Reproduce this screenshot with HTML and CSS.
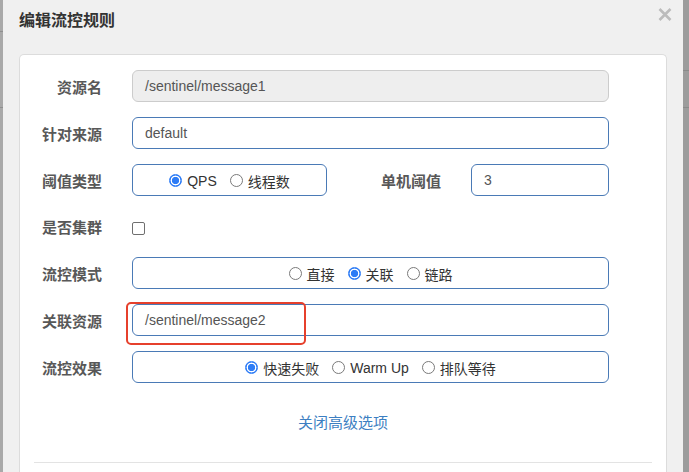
FILE: index.html
```html
<!DOCTYPE html>
<html lang="zh-CN">
<head>
<meta charset="utf-8">
<title>编辑流控规则</title>
<link rel="stylesheet" href="styles.css">
</head>
<body>
<div class="strip strip-left"></div>
<div class="modal">
  <div class="modal-header">
    <h4 class="modal-title">编辑流控规则</h4>
    <span class="close" aria-label="关闭">
      <svg width="14" height="13" viewBox="0 0 14 13"><path d="M1.5 1 L12.5 12 M12.5 1 L1.5 12" stroke="#bcbcbc" stroke-width="2.6" fill="none"/></svg>
    </span>
  </div>
  <div class="card">
    <div class="row">
      <label class="label">资源名</label>
      <div class="control"><div class="input disabled">/sentinel/message1</div></div>
    </div>
    <div class="row">
      <label class="label">针对来源</label>
      <div class="control"><div class="input">default</div></div>
    </div>
    <div class="row">
      <label class="label">阈值类型</label>
      <div class="control split">
        <div class="input radios short">
          <span class="radio-item"><span class="radio checked"></span>QPS</span>
          <span class="radio-item"><span class="radio"></span>线程数</span>
        </div>
        <label class="label label-mid">单机阈值</label>
        <div class="input small">3</div>
      </div>
    </div>
    <div class="row row-check">
      <label class="label">是否集群</label>
      <div class="control"><span class="checkbox"></span></div>
    </div>
    <div class="row">
      <label class="label">流控模式</label>
      <div class="control">
        <div class="input radios">
          <span class="radio-item"><span class="radio"></span>直接</span>
          <span class="radio-item"><span class="radio checked"></span>关联</span>
          <span class="radio-item"><span class="radio"></span>链路</span>
        </div>
      </div>
    </div>
    <div class="row">
      <label class="label">关联资源</label>
      <div class="control highlight-wrap">
        <div class="input">/sentinel/message2</div>
        <div class="highlight"></div>
      </div>
    </div>
    <div class="row">
      <label class="label">流控效果</label>
      <div class="control">
        <div class="input radios">
          <span class="radio-item"><span class="radio checked"></span>快速失败</span>
          <span class="radio-item"><span class="radio"></span>Warm Up</span>
          <span class="radio-item"><span class="radio"></span>排队等待</span>
        </div>
      </div>
    </div>
    <div class="toggle"><a class="link">关闭高级选项</a></div>
    <div class="divider"></div>
  </div>
</div>
<div class="strip strip-right"></div>
</body>
</html>
```
FILE: styles.css
```css
html, body {
  margin: 0;
  padding: 0;
}
body {
  width: 689px;
  height: 472px;
  overflow: hidden;
  display: flex;
  font-family: "Liberation Sans", "Noto Sans CJK SC", sans-serif;
  background: #a6a6a6;
}
.strip {
  height: 472px;
  flex: none;
}
.strip-left {
  width: 3px;
  background:
    linear-gradient(#8f8f8f, #8f8f8f) 0 31px / 100% 1px no-repeat,
    linear-gradient(#8f8f8f, #8f8f8f) 0 107px / 100% 1px no-repeat,
    #a9a9a9;
}
.strip-right {
  width: 6px;
  background:
    linear-gradient(#8a8a8a, #8a8a8a) 0 70px / 100% 1px no-repeat,
    linear-gradient(#8a8a8a, #8a8a8a) 0 107px / 100% 1px no-repeat,
    #9c9c9c;
}
.modal {
  width: 680px;
  flex: none;
  background: #f0f0f0;
  height: 472px;
}
.modal-header {
  display: flex;
  justify-content: space-between;
  align-items: flex-start;
  height: 54px;
  box-sizing: border-box;
  padding: 8px 11px 0 16px;
}
.modal-title {
  margin: 0;
  font-size: 16px;
  line-height: 25px;
  font-weight: 700;
  color: #333;
}
.close {
  display: block;
  width: 14px;
  height: 13px;
  margin-top: 0;
}
.close svg {
  display: block;
}
.card {
  margin: 0 16px;
  background: #fff;
  border: 1px solid #dcdcdc;
  border-bottom: none;
  border-radius: 5px 5px 0 0;
  padding-top: 15px;
  height: 420px;
}
.row {
  display: flex;
  align-items: center;
  height: 32px;
  margin-bottom: 15px;
}
.row-check {
  height: 31px;
}
.label {
  width: 82px;
  margin-right: 30px;
  text-align: right;
  font-size: 15px;
  font-weight: 700;
  color: #585858;
  flex: none;
}
.control {
  width: 477px;
  flex: none;
  display: flex;
  align-items: center;
}
.input {
  box-sizing: border-box;
  width: 100%;
  height: 32px;
  border: 1px solid #4a7ab6;
  border-radius: 6px;
  padding: 0 12px;
  display: flex;
  align-items: center;
  font-size: 14px;
  color: #555;
  background: #fff;
}
.input.disabled {
  background: #eee;
  border-color: #cccccc;
}
.split .short {
  width: 195px;
  flex: none;
}
.label-mid {
  width: 114px;
  margin-right: 30px;
}
.input.small {
  width: 138px;
  flex: none;
}
.radios {
  justify-content: center;
  gap: 13px;
  color: #333;
  padding-top: 1px;
}
.radio-item {
  display: inline-flex;
  align-items: center;
  gap: 5px;
}
.radio {
  box-sizing: border-box;
  width: 13px;
  height: 13px;
  border-radius: 50%;
  border: 1px solid #7a7a7a;
  background: #fff;
  flex: none;
}
.radio.checked {
  border-color: #2d7cf6;
  background: radial-gradient(circle at center, #2d7cf6 0 3.4px, #fff 3.9px 4.7px, #2d7cf6 5.2px);
}
.checkbox {
  box-sizing: border-box;
  display: block;
  width: 13px;
  height: 13px;
  border: 1px solid #6f6f6f;
  border-radius: 2px;
  background: #fff;
  margin-top: 3px;
}
.highlight-wrap {
  position: relative;
}
.highlight {
  position: absolute;
  left: -6px;
  top: -2px;
  width: 180px;
  height: 43px;
  box-sizing: border-box;
  border: 2px solid #e6402c;
  border-radius: 5px;
  pointer-events: none;
}
.toggle {
  text-align: center;
  margin-top: 30px;
  line-height: 20px;
  height: 20px;
}
.link {
  font-size: 15px;
  color: #3d7fc2;
  text-decoration: none;
  cursor: pointer;
}
.divider {
  margin: 29px 14px 0;
  height: 1px;
  background: #e3e3e3;
}
```
